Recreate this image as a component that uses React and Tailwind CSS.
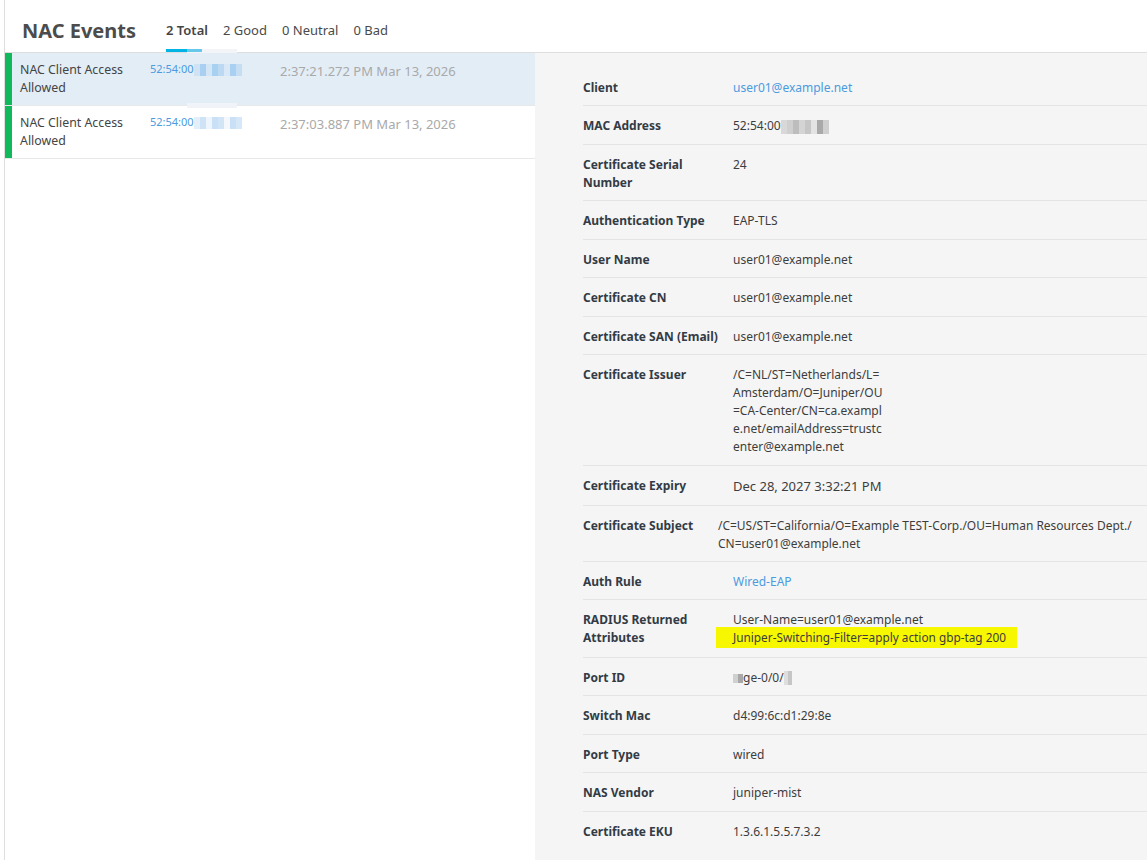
import React from 'react';

const events = [
  {
    time: '2:37:21.272 PM Mar 13, 2026',
    active: true,
    blur: ['#cfe3f5', '#a9d0f0', '#d4e6f6', '#a8d0f0', '#bcd9f3', '#d8e8f6', '#a9d0f0', '#c5def4'],
  },
  {
    time: '2:37:03.887 PM Mar 13, 2026',
    active: false,
    blur: ['#e3effa', '#cfe3f7', '#eef5fc', '#c9e0f6', '#d2e5f7', '#f4f8fd', '#c9e0f6', '#d6e7f8'],
  },
];

const Pixels = ({ colors, w = 'w-[6px]', h = 'h-[12px]' }) => (
  <span className="inline-flex align-middle">
    {colors.map((c, i) => (
      <span key={i} className={`${w} ${h}`} style={{ backgroundColor: c }} />
    ))}
  </span>
);

const Row = ({ label, children, valueClass = 'ml-[150px]', last, tight }) => (
  <div className={`ml-[48px] flex pt-[11px] leading-[18px] ${tight ? 'pb-[7.8px]' : 'pb-[8.5px]'} ${last ? '' : 'border-b border-[#e4e4e4]'}`}>
    <div className="w-0 shrink-0">
      <div className="w-[140px] font-bold text-[#333b45]">{label}</div>
    </div>
    <div className={`${valueClass} text-[#3d3d3d]`}>{children}</div>
  </div>
);

const App = () => {
  return (
    <div className="relative h-[860px] w-[1147px] overflow-hidden bg-white text-[12px] font-['Noto_Sans','Open_Sans',sans-serif] text-[#4a4a4a]">
      {/* Header */}
      <div className="ml-[4px] flex h-[53px] items-stretch border-b border-l border-[#dedede] bg-white pl-[17px]">
        <h1 className="mt-[17px] text-[20px] leading-[27px] font-bold text-[#4c4c4c]">NAC Events</h1>
        <div className="ml-[30px] flex gap-[15px] text-[13px] leading-[18px]">
          <div className="relative pt-[21px] font-semibold text-[#444]">
            2 Total
            <div className="absolute top-[49px] left-0 h-[3px] w-full bg-[#00b4e6]" />
          </div>
          <div className="pt-[21px]">2 Good</div>
          <div className="pt-[21px]">0 Neutral</div>
          <div className="pt-[21px]">0 Bad</div>
        </div>
      </div>

      {/* capture leftovers from the blurred MAC cell */}
      <div className="absolute top-[49px] left-[187px] h-[4px] w-[50px] bg-[#f2f4f7]" />
      <div className="absolute top-[49px] left-[187px] h-[3px] w-[15px] bg-[#66c8ea]" />
      <div className="absolute top-[103px] left-[187px] h-[5px] w-[50px] bg-[#f0f4f8]" />

      <div className="flex h-[807px]">
        {/* Event list */}
        <div className="ml-[4px] w-[531px] border-l border-[#dedede]">
          {events.map((e, i) => (
            <div key={i} className={`flex h-[53px] border-b border-[#e8e8e8] ${e.active ? 'bg-[#e3edf6]' : 'bg-white'}`}>
              <div className="w-[7px] shrink-0 bg-[#12b85c]" />
              <div className="w-[138px] shrink-0 pt-[8px] pl-[8px] text-[12.35px] leading-[18px] text-[#444]">
                NAC Client Access
                <br />
                Allowed
              </div>
              <div className="w-[130px] shrink-0 pt-[8px] text-[11px] leading-[16px] text-[#4a9be0]">
                52:54:00
                <Pixels colors={e.blur} />
              </div>
              <div className="pt-[9px] text-[13px] leading-[18px] text-[#a9a9a9]">{e.time}</div>
            </div>
          ))}
        </div>

        {/* Detail panel */}
        <div className="flex-1 bg-[#f5f5f5] pt-[14.8px]">
          <Row label="Client"><span className="text-[#4a9be0]">user01@example.net</span></Row>
          <Row label="MAC Address">
            52:54:00
            <Pixels colors={['#d8d8d8', '#cfcfcf', '#bdbdbd', '#d4d4d4', '#c6c6c6', '#e3e3e3', '#a9a9a9', '#cfcfcf']} w="w-[6px]" h="h-[14px]" />
          </Row>
          <Row label="Certificate Serial Number">24</Row>
          <Row label="Authentication Type">EAP-TLS</Row>
          <Row label="User Name">user01@example.net</Row>
          <Row label="Certificate CN">user01@example.net</Row>
          <Row label="Certificate SAN (Email)">user01@example.net</Row>
          <Row label="Certificate Issuer">
            <div className="w-[150px] break-all">
              /C=NL/ST=Netherlands/L=
              <br />
              Amsterdam/O=Juniper/OU
              <br />
              =CA-Center/CN=ca.exampl
              <br />
              e.net/emailAddress=trustc
              <br />
              enter@example.net
            </div>
          </Row>
          <Row label="Certificate Expiry">
            <span className="text-[13px] leading-[19.5px]">Dec 28, 2027 3:32:21 PM</span>
          </Row>
          <Row label="Certificate Subject" valueClass="ml-[135px] text-[11.96px]">
            /C=US/ST=California/O=Example TEST-Corp./OU=Human Resources Dept./
            <br />
            CN=user01@example.net
          </Row>
          <Row label="Auth Rule" tight><span className="text-[#4a9be0]">Wired-EAP</span></Row>
          <Row label="RADIUS Returned Attributes">
            User-Name=user01@example.net
            <div className="-mt-[2px] -ml-[17px] h-[21px] w-[301px] bg-[#f7f700] pl-[17px] text-[11.8px] leading-[21px]">
              Juniper-Switching-Filter=apply action gbp-tag 200
            </div>
          </Row>
          <Row label="Port ID">
            <Pixels colors={['#d0d0d0', '#a8a8a8']} w="w-[5px]" h="h-[9px]" />
            ge-0/0/
            <Pixels colors={['#dedede', '#c6c6c6']} w="w-[4px]" h="h-[14px]" />
          </Row>
          <Row label="Switch Mac">d4:99:6c:d1:29:8e</Row>
          <Row label="Port Type">wired</Row>
          <Row label="NAS Vendor">juniper-mist</Row>
          <Row label="Certificate EKU" last>1.3.6.1.5.5.7.3.2</Row>
        </div>
      </div>
    </div>
  );
};

export default App;
